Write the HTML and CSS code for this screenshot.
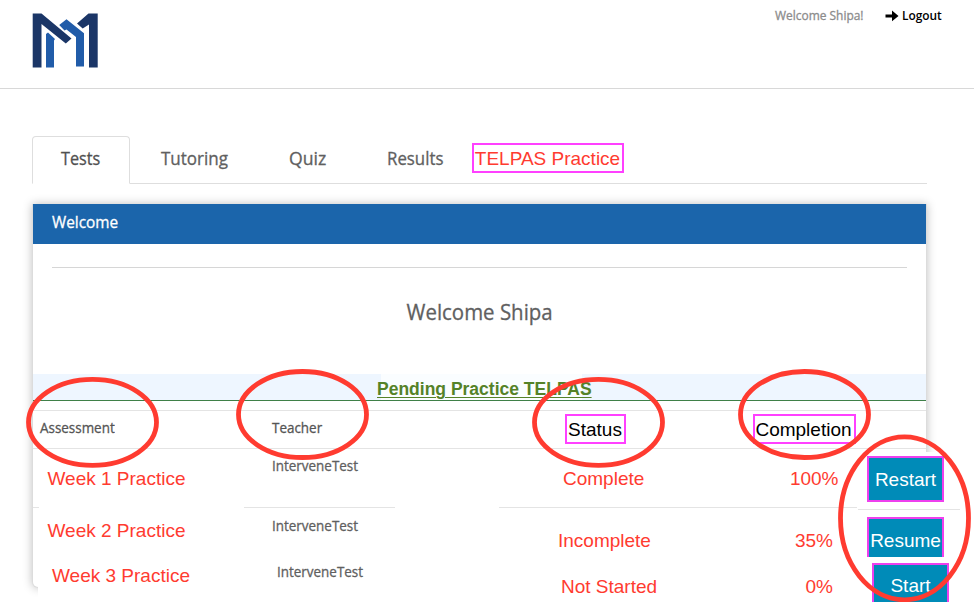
FILE: index.html
```html
<!DOCTYPE html>
<html lang="en">
<head>
<meta charset="utf-8">
<title>Tests</title>
<link rel="stylesheet" href="styles.css">
</head>
<body>
<div class="page">
  <header class="top">
    <svg class="logo" width="66" height="56" viewBox="32 13 66 56" aria-hidden="true">
      <path fill="#1b3667" d="M32.700 13.500h8.800l30 25-5.700 5L41.500 24v43.500h-8.800zM77 23.500l11.500-10h9.200v54H89V24.500l-6.300 4z"/>
      <path fill="#215ca9" d="M46 34l2-1.500 7 6.500-1 1.500v27h-8zM59.200 25l7.300-5.700L84 33.300v33.300h-8V37l-9.500-7.500-2 1z"/>
    </svg>
    <div class="account">
      <span class="greeting"><span class="fit">Welcome Shipa!</span></span>
      <svg class="arrow" width="15" height="12" viewBox="0 0 15 12"><path d="M.5 4.400h6.500V.6L13.500 5.900 7 11.200V7.400H.5z"/></svg>
      <a class="logout"><span class="fit">Logout</span></a>
    </div>
  </header>

  <nav class="tabs">
    <a class="tab active"><span class="fit">Tests</span></a>
    <a class="tab tutoring"><span class="fit">Tutoring</span></a>
    <a class="tab quiz"><span class="fit">Quiz</span></a>
    <a class="tab results"><span class="fit">Results</span></a>
    <a class="boxed telpas">TELPAS Practice</a>
  </nav>

  <main class="panel">
    <div class="edge-cover right"></div>
    <div class="edge-cover bottom"></div>
    <div class="panel-head"><span class="fit">Welcome</span></div>
    <hr class="divider">
    <h1 class="title"><span>Welcome Shipa</span></h1>
    <div class="band"><div class="band-clear"></div><h2>Pending Practice TELPAS</h2></div>
    <section class="table">
      <div class="row head">
        <div class="assessment"><span class="fit">Assessment</span></div>
        <div class="teacher"><span class="fit">Teacher</span></div>
        <div class="status"><span class="boxed">Status</span></div>
        <div class="completion"><span class="boxed">Completion</span></div>
      </div>
      <div class="row first">
        <div class="assessment">Week 1 Practice</div>
        <div class="teacher"><span class="fit">InterveneTest</span></div>
        <div class="status">Complete</div>
        <div class="completion">100%</div>
        <div class="action"><button>Restart</button></div>
      </div>
      <div class="rules"><i></i><i></i><i></i><i></i></div>
      <div class="row second">
        <div class="assessment">Week 2 Practice</div>
        <div class="teacher"><span class="fit">InterveneTest</span></div>
        <div class="status">Incomplete</div>
        <div class="completion">35%</div>
        <div class="action"><button>Resume</button></div>
      </div>
      <div class="row third">
        <div class="assessment">Week 3 Practice</div>
        <div class="teacher"><span class="fit">InterveneTest</span></div>
        <div class="status">Not Started</div>
        <div class="completion">0%</div>
        <div class="action"><button>Start</button></div>
      </div>
    </section>
  </main>

  <svg class="marks" width="974" height="602" viewBox="0 0 974 602">
    <ellipse cx="92.500" cy="422.300" rx="64" ry="43"/>
    <ellipse cx="302.500" cy="414.500" rx="64" ry="43"/>
    <ellipse cx="598.500" cy="422.300" rx="64" ry="43"/>
    <ellipse cx="804.500" cy="414.500" rx="64" ry="43"/>
    <ellipse cx="904.500" cy="518.300" rx="64" ry="81.500"/>
  </svg>
</div>
</body>
</html>
```
FILE: styles.css
```css
* { box-sizing: border-box; }
body { margin: 0; background: #fff; }
.page {
  position: relative;
  width: 974px;
  height: 602px;
  overflow: hidden;
  font-family: "Open Sans", sans-serif;
  color: #606060;
}
.fit {
  display: inline-block;
  transform-origin: 0 50%;
  white-space: nowrap;
  -webkit-text-stroke: .3px currentColor;
}

.top {
  display: flex;
  justify-content: space-between;
  height: 89px;
  padding: 13px 0 0 32px;
  border-bottom: 1px solid #d8d8d8;
}
.logo { display: block; }
.account { display: flex; width: 199.5px; font-size: 12px; line-height: 16px; margin-top: -5px; }
.greeting { width: 110px; color: #8c8c8c; }
.greeting .fit { transform: scaleX(.995); }
.arrow { margin-top: 1.500px; width: 15px; }
.logout { padding-left: 2px; color: #000; font-weight: 600; }
.logout .fit { transform: scaleX(.99); -webkit-text-stroke: 0; }

.tabs {
  display: flex;
  height: 48px;
  width: 895px;
  margin: 47px 0 0 32px;
  font-size: 18px;
  line-height: 24px;
  border-bottom: 1px solid #dedede;
}
.tab { padding-top: 10px; }
.active {
  width: 98px;
  height: 48px;
  padding: 9px 0 0 28px;
  border: 1px solid #dedede;
  border-bottom-color: #fff;
  border-radius: 4px 4px 0 0;
  background: #fff;
  color: #505050;
}
.active .fit { transform: scaleX(.9); }
.tutoring { width: 129px; padding-left: 31px; }
.tutoring .fit { transform: scaleX(.945); }
.quiz { width: 98px; padding-left: 30px; }
.quiz .fit { transform: scaleX(.98); }
.results { width: 115px; padding-left: 29.500px; }
.results .fit { transform: scaleX(.935); }
.boxed {
  display: block;
  border: 2px solid #ff40ff;
  font: 19px/25px "Liberation Sans", Arial, sans-serif;
  text-align: center;
  white-space: nowrap;
}
.telpas { width: 152px; height: 30px; margin-top: 7px; line-height: 27px; text-indent: -1px; color: #ff3b30; }

.panel {
  position: relative;
  width: 895px;
  height: 384px;
  margin: 20px 0 0 32px;
  border: solid #dcdcdc;
  border-width: 0 1px 1px;
  border-radius: 0 0 6px 6px;
  box-shadow: 0 0 10px rgba(0, 0, 0, .25);
  background: #fff;
}
.edge-cover { position: absolute; background: #fff; }
.edge-cover.right { left: 885px; top: 248px; width: 70px; height: 160px; }
.edge-cover.bottom { left: 5px; top: 370px; width: 940px; height: 40px; }
.panel-head {
  height: 40px;
  padding: 7px 0 0 18.500px;
  background: #1b65ab;
  color: #fff;
  font-size: 16px;
  line-height: 22px;
}
.panel-head .fit { transform: scaleX(.96); }
.divider { height: 1px; margin: 23px 19px 0; border: 0; background: #d6d6d6; }
.title { margin: 28px 0 0; font-size: 22px; font-weight: 400; line-height: 30px; text-align: center; }
.title span { display: inline-block; transform: scaleX(.93); -webkit-text-stroke: .3px currentColor; }
.band {
  position: relative;
  height: 27px;
  margin-top: 48px;
  background: #eef6ff;
  border-bottom: 1px solid #3f8048;
}
.band-clear { position: absolute; left: 348px; top: 0; width: 201px; height: 26px; background: #fafdff; }
.band h2 {
  position: relative;
  top: 1.500px;
  margin: 0 0 0 344px;
  width: 216px;
  color: #558228;
  font: bold 17.500px/27px "Liberation Sans", Arial, sans-serif;
  text-decoration: underline;
  text-decoration-thickness: 1px;
  text-underline-offset: 2px;
  white-space: nowrap;
}

.table { position: relative; margin-top: 9px; width: 941px; }
.row {
  display: grid;
  grid-template-columns: 203px 263px 236px 123px 116px;
  font: 19px/20px "Liberation Sans", Arial, sans-serif;
  color: #ff3b30;
  white-space: nowrap;
}
.teacher { font: 14px/20px "Open Sans", sans-serif; color: #606060; padding-left: 35.500px; }
.teacher .fit { transform: scaleX(.96); }
.head {
  grid-template-columns: 203px 263px 236px 191px;
  width: 893px;
  height: 39px;
  border: solid #e4e4e4;
  border-width: 1px 0;
}
.head > div { padding-top: 7px; color: #555; }
.head .assessment { font: 14px/20px "Open Sans", sans-serif; padding-left: 7px; }
.head .assessment .fit, .head .teacher .fit { transform: scaleX(.96); }
.head .boxed { height: 30px; line-height: 27px; color: #000; }
.head .status, .head .completion { padding-top: 3px; }
.head .status { padding-left: 65.500px; }
.head .status .boxed { width: 61px; }
.head .completion { padding-left: 17.500px; }
.head .completion .boxed { width: 103px; text-indent: -1px; }
.completion { text-align: right; }

.first { height: 58px; }
.first .assessment { padding: 20px 0 0 14.500px; }
.first .teacher { padding-top: 7px; }
.first .status { padding: 20px 0 0 64px; }
.first .completion { padding: 20px 19.500px 0 0; }
.first .action { padding: 7px 0 0 9px; }

.rules { display: grid; grid-template-columns: 6px 151px 358px 103px; height: 1px; }
.rules i { height: 1px; background: #e4e4e4; }
.rules i:nth-child(2) { margin-left: 205px; margin-right: -205px; }
.rules i:nth-child(3) { margin-left: 309px; margin-right: -309px; }
.rules i:nth-child(4) { margin: 2px -309px 0 310px; }

.second { height: 49px; }
.second .assessment { padding: 13px 0 0 14.500px; }
.second .teacher { padding-top: 8px; }
.second .status { padding: 23px 0 0 59px; }
.second .completion { padding: 23px 25px 0 0; }
.second .action { padding: 9px 0 0 9px; }

.third { height: 46px; }
.third .assessment { padding: 9px 0 0 19px; }
.third .teacher { padding-top: 5px; padding-left: 40.500px; }
.third .status { padding: 20px 0 0 62px; }
.third .completion { padding: 20px 25px 0 0; }
.third .action { padding: 6px 0 0 14px; }

button {
  display: block;
  width: 77px;
  height: 46px;
  padding: 0;
  border: 2px solid #ee3fee;
  background: #008bb8;
  color: #fff;
  font: 19px/44px "Liberation Sans", Arial, sans-serif;
  text-align: center;
}
.second button { height: 40px; border-bottom: 0; }
.third button { height: 42px; line-height: 42px; border-bottom: 0; }

.marks { position: absolute; left: 0; top: 0; }
.marks ellipse { fill: none; stroke: #ff3b30; stroke-width: 4.800px; }
```
